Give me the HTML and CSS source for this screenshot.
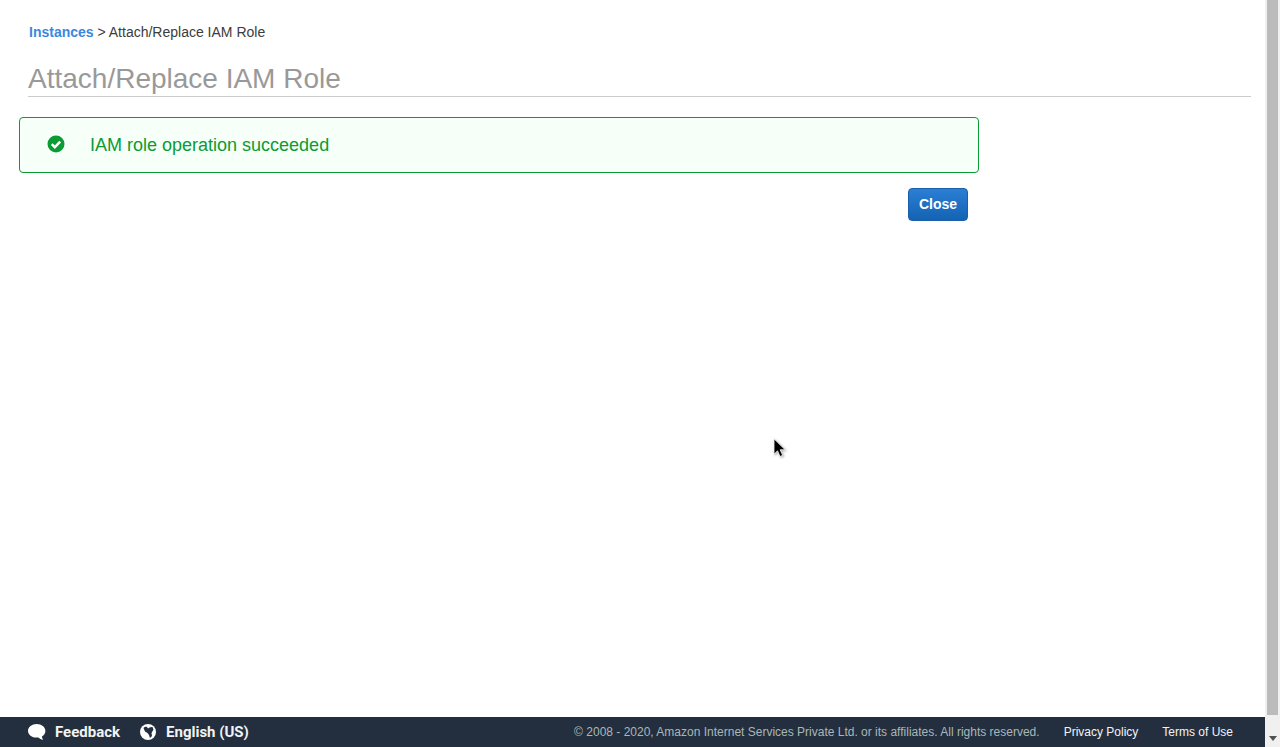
FILE: index.html
```html
<!DOCTYPE html>
<html lang="en">
<head>
<meta charset="utf-8">
<title>Attach/Replace IAM Role</title>
<link rel="stylesheet" href="styles.css">
</head>
<body>
<div class="viewport">
  <div class="page">
    <main class="content">
      <nav class="crumbs"><a class="crumb-link" href="#">Instances</a> &gt; Attach/Replace IAM Role</nav>
      <h1 class="title">Attach/Replace IAM Role</h1>
      <div class="panel">
        <div class="alert">
          <svg class="alert-icon" viewBox="0 0 18 18" width="18" height="18"><circle cx="9" cy="9" r="8.5" fill="#0a9b34"/><path d="M4.8 9.2l3 3 5.4-5.6" fill="none" stroke="#fff" stroke-width="2.4"/></svg>
          <span class="alert-text">IAM role operation succeeded</span>
        </div>
        <div class="actions"><button class="btn">Close</button></div>
      </div>
    </main>
  </div>
  <div class="scrollbar">
    <div class="thumb"></div>
    <svg class="arrow" viewBox="0 0 8 5" width="8" height="5"><path d="M0 0h8L4 5z" fill="#505050"/></svg>
  </div>
  <footer class="footer">
    <div class="foot-left">
      <a class="foot-item" href="#">
        <svg class="foot-icon" viewBox="0 0 18 18" width="18" height="18"><path d="M8.700 1C13.500 1 17.400 4.100 17.400 7.900c0 2.300-1.400 4.300-3.500 5.500.1 1.300.5 2.300 1.300 3.400-2.100-.2-3.700-1.100-4.800-2.300-.5.100-1.100.1-1.700.1C3.900 14.600 0 11.600 0 7.900S3.900 1 8.700 1z" fill="#fff"/></svg>
        Feedback
      </a>
      <a class="foot-item foot-item-lang" href="#">
        <svg class="foot-icon" viewBox="0 0 16 16" width="16" height="16"><circle cx="8" cy="8" r="8" fill="#fff"/><path d="M3.500 4C4.500 2.800 6 2.300 7 3L8 4.500L10 3.200L12.500 3L13.500 5.500L11.500 9L12 12L10 14L9 11L7.500 9L5 7.500z" fill="#232f3e"/></svg>
        English (US)
      </a>
    </div>
    <div class="foot-right">
      <span class="copy">© 2008 - 2020, Amazon Internet Services Private Ltd. or its affiliates. All rights reserved.</span>
      <a class="foot-link" href="#">Privacy Policy</a>
      <a class="foot-link" href="#">Terms of Use</a>
    </div>
  </footer>
  <svg class="cursor" viewBox="0 0 14 20" width="14" height="20"><path d="M1 .8v15.500l3.500-3.500 2.500 5.700 2.700-1.200-2.500-5.500h5z" fill="#000" stroke="#fff" stroke-width=".8"/></svg>
</div>
</body>
</html>
```
FILE: styles.css
```css
html, body { margin: 0; height: 100%; overflow: hidden; background: #fff; }
.viewport {
  position: relative;
  display: grid;
  grid-template-columns: 1fr 15px;
  grid-template-rows: 1fr 30px;
  height: 747px;
  font-family: "Liberation Sans", Arial, sans-serif;
}
.page { min-width: 0; }
.content { padding: 24px 14px 0 19px; }
.crumbs { margin-left: 10px; font-size: 14px; line-height: 16px; color: #3c3c3c; }
.crumb-link { color: #3b87e0; font-weight: 700; text-decoration: none; }
.title {
  margin: 22px 0 0 9px;
  border-bottom: 1px solid #ccc;
  font-size: 28px;
  line-height: 34px;
  font-weight: 400;
  color: #999;
}
.panel { width: 960px; margin-top: 20px; }
.alert {
  display: flex;
  align-items: center;
  box-sizing: border-box;
  height: 56px;
  padding-left: 27px;
  border: 1px solid #0a9b34;
  border-radius: 4px;
  background: #f6fff8;
  font-size: 18px;
  color: #0a9b34;
}
.alert-icon { flex: none; margin: 0 25px 2px 0; }
.actions { display: flex; justify-content: flex-end; margin: 15px 11px 0 0; }
.btn {
  box-sizing: border-box;
  width: 60px;
  height: 33px;
  padding: 0 0 2px;
  border: 1px solid #1a5fa8;
  border-radius: 4px;
  background: linear-gradient(#2a7fd4, #1462b4);
  color: #fff;
  font: 700 14px "Liberation Sans", Arial, sans-serif;
}
.scrollbar {
  grid-row: 1 / 3;
  grid-column: 2;
  display: flex;
  flex-direction: column;
  align-items: center;
  background: #f0f0f0;
}
.thumb { width: 11px; height: 715px; background: #bbb; }
.arrow { margin-top: 21px; }
.footer {
  grid-row: 2;
  grid-column: 1;
  display: flex;
  justify-content: space-between;
  align-items: center;
  padding: 0 32px 0 28px;
  background: #232f3e;
}
.foot-left { display: flex; gap: 20px; }
.foot-item {
  display: flex;
  align-items: center;
  gap: 9px;
  color: #f2f3f3;
  font: 700 15px Roboto, sans-serif;
  text-decoration: none;
}
.foot-item-lang { gap: 10px; }
.foot-right { display: flex; align-items: center; font-size: 12px; }
.copy { color: #aab7b8; margin-right: 24px; }
.foot-link { color: #f2f3f3; text-decoration: none; margin-left: 24px; }
.copy + .foot-link { margin-left: 0; }
.cursor { position: absolute; left: 773px; top: 438px; filter: drop-shadow(1px 1px 1px rgba(0, 0, 0, .35)); }
```
